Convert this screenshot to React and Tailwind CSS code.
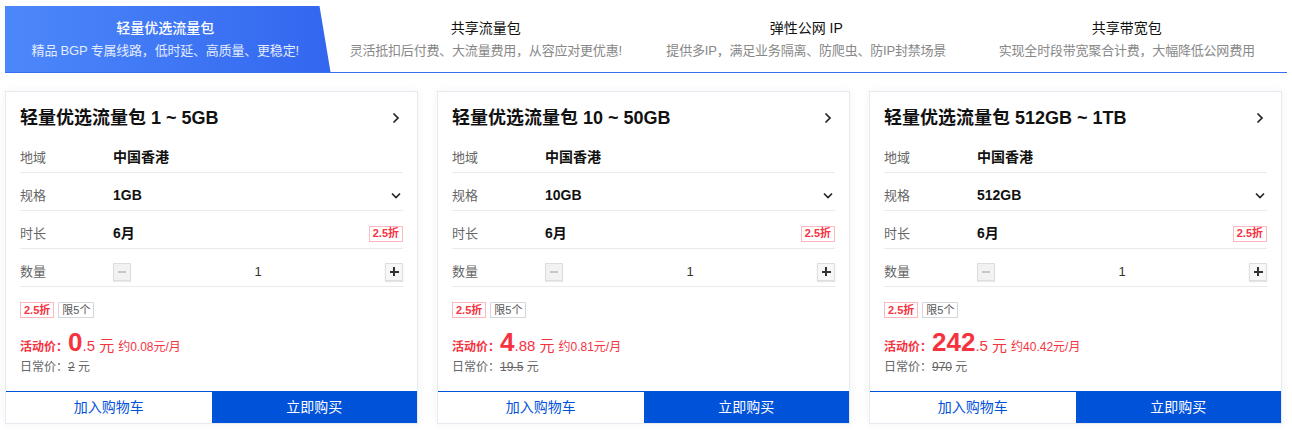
import React from 'react';

const FONT = { fontFamily: '"Liberation Sans", "Noto Sans CJK SC", sans-serif' };

const tabs = [
  { title: '轻量优选流量包', desc: '精品 BGP 专属线路，低时延、高质量、更稳定!' },
  { title: '共享流量包', desc: '灵活抵扣后付费、大流量费用，从容应对更优惠!' },
  { title: '弹性公网 IP', desc: '提供多IP，满足业务隔离、防爬虫、防IP封禁场景' },
  { title: '共享带宽包', desc: '实现全时段带宽聚合计费，大幅降低公网费用' },
];

const cards = [
  { range: '1 ~ 5GB', spec: '1GB', big: '0', small: '.5', month: '约0.08元/月', orig: '2' },
  { range: '10 ~ 50GB', spec: '10GB', big: '4', small: '.88', month: '约0.81元/月', orig: '19.5' },
  { range: '512GB ~ 1TB', spec: '512GB', big: '242', small: '.5', month: '约40.42元/月', orig: '970' },
];

function ChevronRight() {
  return (
    <svg width="8" height="12" viewBox="0 0 8 12" fill="none">
      <path d="M1.5 1.5L6 6l-4.5 4.5" stroke="#222" strokeWidth="1.7" />
    </svg>
  );
}

function ChevronDown() {
  return (
    <svg width="10" height="7" viewBox="0 0 10 7" fill="none">
      <path d="M1 1.5l4 4 4-4" stroke="#222" strokeWidth="1.6" />
    </svg>
  );
}

function Discount() {
  return (
    <span className="inline-flex items-center h-[16px] px-[3px] border border-[#ffb8bc] text-[#f5333f] text-[11px] font-bold leading-none">
      2.5折
    </span>
  );
}

function Row({ label, children }) {
  return (
    <div className="flex items-center h-[38px] pt-[8px] border-b border-[#e9e9ee]">
      <span className="w-[93px] shrink-0 text-[13px] text-[#666]">{label}</span>
      <div className="flex-1 flex items-center min-w-0">{children}</div>
    </div>
  );
}

function Card({ card }) {
  return (
    <div className="w-[413px] h-[333px] flex flex-col bg-white border border-[#e6e9f0] shadow-[0_0_8px_rgba(30,50,90,0.06)]">
      <div className="flex-1 px-[14px]">
        {/* Title */}
        <div className="flex items-center justify-between pt-[15px] pb-[6px]">
          <h3 className="text-[18px] leading-[22px] font-bold text-[#111]">
            轻量优选流量包 {card.range}
          </h3>
          <span className="mr-[3px]"><ChevronRight /></span>
        </div>

        <Row label="地域">
          <span className="text-[14px] font-bold text-[#111]">中国香港</span>
        </Row>
        <Row label="规格">
          <span className="flex-1 text-[14px] font-bold text-[#111]">{card.spec}</span>
          <span className="mr-[2px]"><ChevronDown /></span>
        </Row>
        <Row label="时长">
          <span className="flex-1 text-[14px] font-bold text-[#111]">6月</span>
          <Discount />
        </Row>
        <Row label="数量">
          <button className="w-[18px] h-[18px] flex items-center justify-center bg-[#f2f2f2] border border-[#dedede] shadow-[0_1px_1px_rgba(0,0,0,0.08)]">
            <span className="block w-[8px] h-[2px] bg-[#c8c8c8]" />
          </button>
          <span className="flex-1 text-center text-[13px] text-[#333]">1</span>
          <button className="relative w-[18px] h-[18px] flex items-center justify-center bg-[#f7f7f7] border border-[#dedede] shadow-[0_1px_1px_rgba(0,0,0,0.1)]">
            <span className="absolute w-[9px] h-[2px] bg-[#333]" />
            <span className="absolute w-[2px] h-[9px] bg-[#333]" />
          </button>
        </Row>

        {/* Tags */}
        <div className="flex items-center gap-[4px] mt-[15px]">
          <Discount />
          <span className="inline-flex items-center h-[16px] px-[3px] border border-[#d5d7dd] text-[#555] text-[11px] leading-none">
            限5个
          </span>
        </div>

        {/* Price */}
        <div className="flex items-baseline mt-[9px] h-[30px] text-[#f5333f] whitespace-nowrap">
          <span className="w-[48px] shrink-0 text-[12px] font-bold">活动价：</span>
          <span className="text-[26px] leading-[30px] font-bold">{card.big}</span>
          <span className="text-[15px]">{card.small} 元</span>
          <span className="ml-[4px] text-[12px]">{card.month}</span>
        </div>
        <div className="flex items-center text-[12px] text-[#666] mt-[1px] whitespace-nowrap">
          <span className="w-[48px] shrink-0">日常价：</span>
          <span><span className="line-through">{card.orig}</span> 元</span>
        </div>
      </div>

      {/* Actions */}
      <div className="flex h-[32px]">
        <button className="flex-1 bg-white border-t border-[#0052d9] text-[14px] text-[#0052d9]">
          加入购物车
        </button>
        <button className="flex-1 bg-[#0052d9] text-[14px] text-white">
          立即购买
        </button>
      </div>
    </div>
  );
}

export default function App() {
  return (
    <div className="w-[1292px] h-[432px] bg-white pt-[6px] px-[5px] overflow-hidden" style={FONT}>
      {/* Tabs */}
      <div className="grid grid-cols-4 h-[67px] border-b border-[#3a6ef1]">
        {tabs.map((t, i) => (
          <div key={t.title} className="relative flex flex-col items-center pt-[13px]">
            {i === 0 && (
              <div className="absolute inset-y-0 left-0 -right-[5px] bg-gradient-to-r from-[#4d88fa] to-[#3366ef] [clip-path:polygon(0_0,calc(100%_-_11px)_0,100%_100%,0_100%)]" />
            )}
            <div className={`relative text-[14px] leading-[18px] ${i === 0 ? 'text-white font-medium' : 'text-[#111]'}`}>
              {t.title}
            </div>
            <div className={`relative mt-[5px] text-[13px] leading-[18px] tracking-[-0.2px] ${i === 0 ? 'text-[#e3ebff]' : 'text-[#888]'}`}>
              {t.desc}
            </div>
          </div>
        ))}
      </div>

      {/* Cards */}
      <div className="flex gap-[19px] mt-[18px]">
        {cards.map(c => (
          <Card key={c.range} card={c} />
        ))}
      </div>
    </div>
  );
}
